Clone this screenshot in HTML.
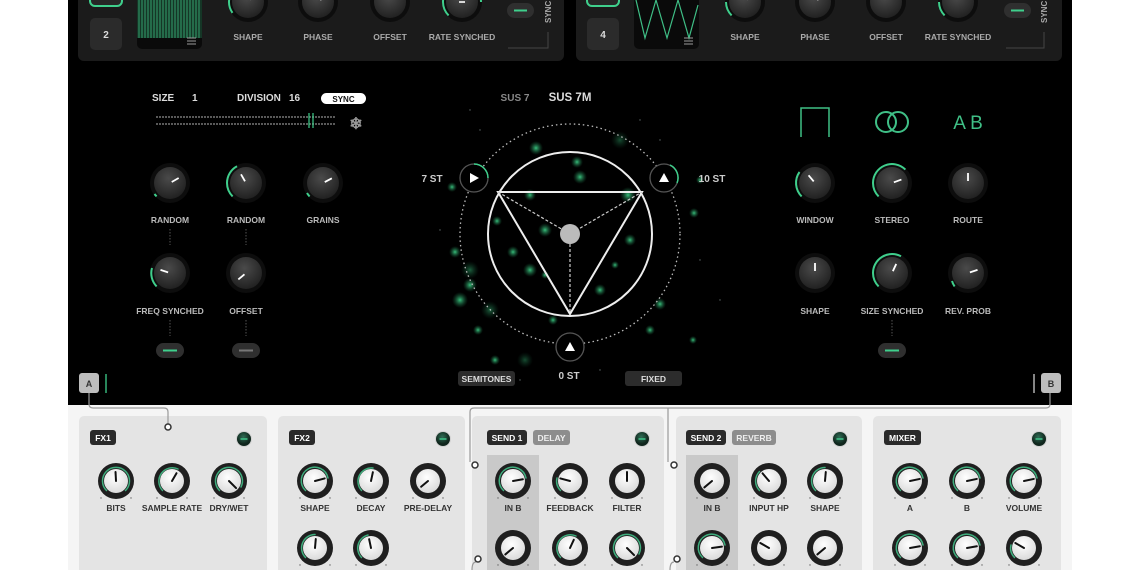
<!DOCTYPE html>
<html><head><meta charset="utf-8">
<style>
html,body{margin:0;padding:0;background:#fff;width:1140px;height:570px;overflow:hidden}
svg{display:block}
text{font-family:"Liberation Sans",sans-serif;font-weight:bold}
</style></head><body>
<svg width="1140" height="570" viewBox="0 0 1140 570" xmlns="http://www.w3.org/2000/svg">
<defs>
<radialGradient id="dk" cx="45%" cy="35%" r="70%"><stop offset="0" stop-color="#4a4a4a"/><stop offset="1" stop-color="#1e1e1e"/></radialGradient>
<radialGradient id="lk" cx="45%" cy="35%" r="70%"><stop offset="0" stop-color="#ffffff"/><stop offset="1" stop-color="#d8d8d8"/></radialGradient>
<radialGradient id="gl"><stop offset="0" stop-color="#3fd48a" stop-opacity=".9"/><stop offset="1" stop-color="#1a6b43" stop-opacity="0"/></radialGradient>
<radialGradient id="pw" cx="45%" cy="35%"><stop offset="0" stop-color="#2f6d55"/><stop offset="1" stop-color="#10261d"/></radialGradient>
<g id="dkb"><circle r="20" fill="#0d0d0d"/><circle r="16" fill="url(#dk)"/></g>
<g id="lkb"><circle r="18" fill="#1f1f1f"/><circle r="12" fill="url(#lk)"/><circle cx="-15" cy="17" r=".7" fill="#666"/><circle cx="15" cy="17" r=".7" fill="#666"/></g>
<g id="pwr"><circle r="8" fill="#bdbdbd" opacity=".5"/><circle r="7" fill="url(#pw)"/><line x1="-3.5" x2="3.5" stroke="#3fbf86" stroke-width="1.6"/></g>
</defs>

<rect x="68" y="0" width="1004" height="570" fill="#f5f5f5"/>
<rect x="68" y="0" width="1004" height="405" fill="#000"/>

<rect x="78" y="-8" width="486" height="69" rx="6" fill="#1b1b1b"/>
<rect x="576" y="-8" width="486" height="69" rx="6" fill="#1b1b1b"/>

<rect x="90" y="-12" width="32" height="18" rx="5" fill="#262626" stroke="#3fcf8c" stroke-width="2"/>
<rect x="90" y="18" width="32" height="32" rx="5" fill="#2b2b2b"/>
<text x="106" y="38" fill="#ddd" font-size="10" text-anchor="middle">2</text>
<rect x="137" y="-4" width="65" height="53" rx="5" fill="#0a0a0a"/>
<g stroke="#3fbf86" stroke-width="1" opacity=".9">
<path d="M139 0 V38 M142 0 V38 M145 0 V38 M148 0 V38 M151 0 V38 M154 0 V38 M157 0 V38 M160 0 V38 M163 0 V38 M166 0 V38 M169 0 V38 M172 0 V38 M175 0 V38 M178 0 V38 M181 0 V38 M184 0 V38 M187 0 V38 M190 0 V38 M193 0 V38 M196 0 V38 M199 0 V38"/>
</g>
<rect x="137" y="0" width="65" height="38" fill="#2a8a5c" opacity=".35"/>
<path d="M187 38h9M187 41h9M187 44h9" stroke="#999" stroke-width="1"/>

<g transform="translate(248,2)"><use href="#dkb"/><path d="M -13.4 13.4 A19 19 0 0 1 -19 0" stroke="#3fcf8c" stroke-width="2" fill="none" transform="rotate(10)"/><line x1="0" y1="-3" x2="0" y2="-9" stroke="#fff" stroke-width="1.6" transform="rotate(40)"/></g>
<g transform="translate(318,2)"><use href="#dkb"/><line x1="0" y1="-3" x2="0" y2="-9" stroke="#fff" stroke-width="1.6" transform="rotate(50)"/></g>
<g transform="translate(390,2)"><use href="#dkb"/><line x1="0" y1="-3" x2="0" y2="-9" stroke="#fff" stroke-width="1.6"/></g>
<g transform="translate(462,2)"><use href="#dkb"/><path d="M -13.4 13.4 A19 19 0 0 1 -19 0 A19 19 0 0 1 0 -19" stroke="#3fcf8c" stroke-width="2" fill="none"/><path d="M0 -19 A19 19 0 0 1 13.4 -13.4 A19 19 0 0 1 19 0" stroke="#3fcf8c" stroke-width="2" fill="none"/><line x1="-3" y1="0" x2="3" y2="0" stroke="#fff" stroke-width="1.6"/></g>
<g fill="#aaa" font-size="8.5" text-anchor="middle">
<text x="248" y="40">SHAPE</text><text x="318" y="40">PHASE</text><text x="390" y="40">OFFSET</text><text x="462" y="40">RATE SYNCHED</text>
<text x="745" y="40">SHAPE</text><text x="815" y="40">PHASE</text><text x="886" y="40">OFFSET</text><text x="958" y="40">RATE SYNCHED</text>
</g>
<rect x="507" y="3" width="27" height="15" rx="7.5" fill="#2f2f2f"/><line x1="514" y1="10.5" x2="527" y2="10.5" stroke="#3fcf8c" stroke-width="2"/>
<text transform="translate(551,23) rotate(-90)" fill="#aaa" font-size="8">SYNC</text>
<path d="M548 32 V48 H508" stroke="#444" fill="none"/>

<rect x="587" y="-12" width="32" height="18" rx="5" fill="#262626" stroke="#3fcf8c" stroke-width="2"/>
<rect x="587" y="18" width="32" height="32" rx="5" fill="#2b2b2b"/>
<text x="603" y="38" fill="#ddd" font-size="10" text-anchor="middle">4</text>
<rect x="634" y="-4" width="65" height="53" rx="5" fill="#0a0a0a"/>
<path d="M636 0 L645 38 L656 0 L667 38 L678 0 L689 38 L698 5" stroke="#3fbf86" stroke-width="1.2" fill="none"/>
<path d="M684 38h9M684 41h9M684 44h9" stroke="#999" stroke-width="1"/>
<g transform="translate(745,2)"><use href="#dkb"/><path d="M -13.4 13.4 A19 19 0 0 1 -19 0" stroke="#3fcf8c" stroke-width="2" fill="none"/><line x1="0" y1="-3" x2="0" y2="-9" stroke="#fff" stroke-width="1.6" transform="rotate(40)"/></g>
<g transform="translate(815,2)"><use href="#dkb"/><line x1="0" y1="-3" x2="0" y2="-9" stroke="#fff" stroke-width="1.6" transform="rotate(50)"/></g>
<g transform="translate(886,2)"><use href="#dkb"/><line x1="0" y1="-3" x2="0" y2="-9" stroke="#fff" stroke-width="1.6"/></g>
<g transform="translate(958,2)"><use href="#dkb"/><path d="M -13.4 13.4 A19 19 0 0 1 -19 0" stroke="#3fcf8c" stroke-width="2" fill="none"/><line x1="0" y1="-3" x2="0" y2="-9" stroke="#fff" stroke-width="1.6" transform="rotate(10)"/></g>
<rect x="1004" y="3" width="27" height="15" rx="7.5" fill="#2f2f2f"/><line x1="1011" y1="10.5" x2="1024" y2="10.5" stroke="#3fcf8c" stroke-width="2"/>
<text transform="translate(1047,23) rotate(-90)" fill="#aaa" font-size="8">SYNC</text>
<path d="M1044 32 V48 H1006" stroke="#444" fill="none"/>

<g fill="url(#gl)">
<circle cx="577" cy="162" r="6"/><circle cx="580" cy="177" r="7"/><circle cx="452" cy="187" r="5"/><circle cx="497" cy="221" r="5"/><circle cx="536" cy="148" r="7"/>
<circle cx="628" cy="195" r="8"/><circle cx="694" cy="213" r="5"/><circle cx="460" cy="300" r="8"/><circle cx="478" cy="330" r="5"/><circle cx="470" cy="285" r="7"/>
<circle cx="660" cy="304" r="6"/><circle cx="693" cy="340" r="4"/><circle cx="553" cy="320" r="5"/><circle cx="530" cy="270" r="7"/><circle cx="600" cy="290" r="6"/>
<circle cx="545" cy="230" r="7"/><circle cx="630" cy="240" r="6"/><circle cx="495" cy="360" r="5"/><circle cx="650" cy="330" r="5"/><circle cx="455" cy="252" r="6"/>
<circle cx="530" cy="195" r="6"/><circle cx="513" cy="252" r="6"/><circle cx="545" cy="275" r="4"/><circle cx="700" cy="180" r="4"/><circle cx="615" cy="265" r="4"/>
<circle cx="470" cy="270" r="9" opacity=".5"/><circle cx="490" cy="310" r="9" opacity=".5"/><circle cx="620" cy="140" r="9" opacity=".4"/><circle cx="525" cy="360" r="8" opacity=".4"/>
</g>
<g fill="#9aa" opacity=".6">
<circle cx="480" cy="130" r=".7"/><circle cx="640" cy="120" r=".7"/><circle cx="700" cy="260" r=".7"/><circle cx="440" cy="230" r=".7"/><circle cx="720" cy="300" r=".7"/><circle cx="600" cy="370" r=".7"/><circle cx="470" cy="110" r=".7"/><circle cx="660" cy="140" r=".7"/><circle cx="520" cy="380" r=".7"/>
</g>

<circle cx="570" cy="234" r="110" fill="none" stroke="#bbb" stroke-width="1.3" stroke-dasharray="1.5 3"/>
<circle cx="570" cy="234" r="82" fill="none" stroke="#eee" stroke-width="2"/>
<path d="M498 192 L642 192 L570 314 Z" fill="none" stroke="#eee" stroke-width="2"/>
<path d="M498 192 L570 234 L642 192 M570 234 L570 314" fill="none" stroke="#ccc" stroke-width="1.2" stroke-dasharray="3 2"/>
<circle cx="570" cy="234" r="10" fill="#bbb"/>
<g>
<circle cx="474" cy="178" r="14" fill="#000" stroke="#555" stroke-width="1.3"/><path d="M474 164 A14 14 0 0 1 488 178" stroke="#3fcf8c" stroke-width="1.5" fill="none"/><path d="M470 173 L479 178 L470 183 Z" fill="#fff"/>
<circle cx="664" cy="178" r="14" fill="#000" stroke="#555" stroke-width="1.3"/><path d="M670 165 A14 14 0 0 1 677 183" stroke="#3fcf8c" stroke-width="1.5" fill="none"/><path d="M664 173 L669 182 L659 182 Z" fill="#fff"/>
<circle cx="570" cy="347" r="14" fill="#000" stroke="#555" stroke-width="1.3"/><path d="M570 342 L575 351 L565 351 Z" fill="#fff"/>
</g>
<g fill="#ccc" font-size="10" text-anchor="middle">
<text x="432" y="182">7 ST</text><text x="712" y="182">10 ST</text><text x="569" y="379">0 ST</text>
</g>
<text x="515" y="101" fill="#888" font-size="10" text-anchor="middle">SUS 7</text>
<text x="570" y="101" fill="#ddd" font-size="11.5" text-anchor="middle">SUS 7M</text>
<rect x="458" y="371" width="57" height="15" rx="3" fill="#2c2c2c"/><text x="486.5" y="382" fill="#ddd" font-size="8.5" text-anchor="middle">SEMITONES</text>
<rect x="625" y="371" width="57" height="15" rx="3" fill="#2c2c2c"/><text x="653.5" y="382" fill="#ddd" font-size="8.5" text-anchor="middle">FIXED</text>

<g fill="#ddd" font-size="10">
<text x="152" y="101">SIZE</text><text x="192" y="101">1</text><text x="237" y="101">DIVISION</text><text x="289" y="101">16</text>
</g>
<rect x="321" y="93" width="45" height="11" rx="5.5" fill="#fff"/><text x="343.5" y="102" fill="#111" font-size="8" text-anchor="middle">SYNC</text>
<path d="M156 117 H336 M156 124 H336" stroke="#777" stroke-width="1.5" stroke-dasharray="2 1"/>
<path d="M309 113 V128 M313 113 V128" stroke="#3fcf8c" stroke-width="1.2"/>
<text x="356" y="129" fill="#999" font-size="16" text-anchor="middle">❄</text>

<g transform="translate(170,183)"><use href="#dkb"/><path d="M -13.4 13.4 A19 19 0 0 1 -15.5 11" stroke="#3fcf8c" stroke-width="2" fill="none"/><line x1="0" y1="-2" x2="0" y2="-10" stroke="#fff" stroke-width="1.8" transform="rotate(60)"/></g>
<g transform="translate(246,183)"><use href="#dkb"/><path d="M -13.4 13.4 A19 19 0 0 1 -19 0 A19 19 0 0 1 -9 -16.7" stroke="#3fcf8c" stroke-width="2" fill="none"/><line x1="0" y1="-2" x2="0" y2="-10" stroke="#fff" stroke-width="1.8" transform="rotate(-30)"/></g>
<g transform="translate(323,183)"><use href="#dkb"/><path d="M -13.4 13.4 A19 19 0 0 1 -16 10" stroke="#3fcf8c" stroke-width="2" fill="none"/><line x1="0" y1="-2" x2="0" y2="-10" stroke="#fff" stroke-width="1.8" transform="rotate(62)"/></g>
<g transform="translate(170,273)"><use href="#dkb"/><path d="M -13.4 13.4 A19 19 0 0 1 -18 -5" stroke="#3fcf8c" stroke-width="2" fill="none"/><line x1="0" y1="-2" x2="0" y2="-10" stroke="#fff" stroke-width="1.8" transform="rotate(-72)"/></g>
<g transform="translate(246,273)"><use href="#dkb"/><line x1="0" y1="-2" x2="0" y2="-10" stroke="#fff" stroke-width="1.8" transform="rotate(-130)"/></g>
<g fill="#bbb" font-size="8.5" text-anchor="middle">
<text x="170" y="223">RANDOM</text><text x="246" y="223">RANDOM</text><text x="323" y="223">GRAINS</text>
<text x="170" y="314">FREQ SYNCHED</text><text x="246" y="314">OFFSET</text>
<text x="815" y="223">WINDOW</text><text x="892" y="223">STEREO</text><text x="968" y="223">ROUTE</text>
<text x="815" y="314">SHAPE</text><text x="892" y="314">SIZE SYNCHED</text><text x="968" y="314">REV. PROB</text>
</g>
<path d="M170 229 V245 M246 229 V245 M170 320 V336 M246 320 V336 M892 320 V336" stroke="#555" stroke-width="1" stroke-dasharray="1.5 1.5"/>
<rect x="156" y="343" width="28" height="15" rx="7.5" fill="#2f2f2f"/><line x1="163" y1="350.5" x2="177" y2="350.5" stroke="#3fcf8c" stroke-width="2"/>
<rect x="232" y="343" width="28" height="15" rx="7.5" fill="#2f2f2f"/><line x1="239" y1="350.5" x2="253" y2="350.5" stroke="#777" stroke-width="2"/>
<rect x="878" y="343" width="28" height="15" rx="7.5" fill="#2f2f2f"/><line x1="885" y1="350.5" x2="899" y2="350.5" stroke="#3fcf8c" stroke-width="2"/>

<path d="M801 137 V108 H829 V137" stroke="#3fbf86" stroke-width="1.5" fill="none"/>
<circle cx="886" cy="122" r="10" fill="none" stroke="#3fbf86" stroke-width="2"/><circle cx="898" cy="122" r="10" fill="none" stroke="#3fbf86" stroke-width="2"/>
<text x="968" y="129" fill="#3fbf86" font-size="19" text-anchor="middle" style="font-weight:normal">A B</text>
<g transform="translate(815,183)"><use href="#dkb"/><path d="M -13.4 13.4 A19 19 0 0 1 -15.5 -11" stroke="#3fcf8c" stroke-width="2" fill="none"/><line x1="0" y1="-2" x2="0" y2="-10" stroke="#fff" stroke-width="1.8" transform="rotate(-40)"/></g>
<g transform="translate(892,183)"><use href="#dkb"/><path d="M -13.4 13.4 A19 19 0 0 1 -19 0 A19 19 0 0 1 13.4 -13.4" stroke="#3fcf8c" stroke-width="2" fill="none"/><line x1="0" y1="-2" x2="0" y2="-10" stroke="#fff" stroke-width="1.8" transform="rotate(70)"/></g>
<g transform="translate(968,183)"><use href="#dkb"/><line x1="0" y1="-2" x2="0" y2="-10" stroke="#fff" stroke-width="1.8"/></g>
<g transform="translate(815,273)"><use href="#dkb"/><line x1="0" y1="-2" x2="0" y2="-10" stroke="#fff" stroke-width="1.8"/></g>
<g transform="translate(892,273)"><use href="#dkb"/><path d="M -13.4 13.4 A19 19 0 0 1 -19 0 A19 19 0 0 1 9 -16.7" stroke="#3fcf8c" stroke-width="2" fill="none"/><line x1="0" y1="-2" x2="0" y2="-10" stroke="#fff" stroke-width="1.8" transform="rotate(25)"/></g>
<g transform="translate(968,273)"><use href="#dkb"/><path d="M -13.4 13.4 A19 19 0 0 1 -16 8" stroke="#3fcf8c" stroke-width="2" fill="none"/><line x1="0" y1="-2" x2="0" y2="-10" stroke="#fff" stroke-width="1.8" transform="rotate(72)"/></g>

<rect x="79" y="373" width="20" height="20" rx="3" fill="#bdbdbd"/><text x="89" y="387" fill="#333" font-size="9" text-anchor="middle">A</text>
<line x1="106" y1="374" x2="106" y2="393" stroke="#3fcf8c" stroke-width="1.3"/>
<rect x="1041" y="373" width="20" height="20" rx="3" fill="#bdbdbd"/><text x="1051" y="387" fill="#333" font-size="9" text-anchor="middle">B</text>
<line x1="1034" y1="374" x2="1034" y2="393" stroke="#ccc" stroke-width="1.3"/>

<g fill="#e4e4e4">
<rect x="79" y="416" width="188" height="160" rx="5"/>
<rect x="278" y="416" width="187" height="160" rx="5"/>
<rect x="472" y="416" width="192" height="160" rx="5"/>
<rect x="676" y="416" width="186" height="160" rx="5"/>
<rect x="873" y="416" width="188" height="160" rx="5"/>
</g>
<rect x="487" y="455" width="52" height="120" fill="#c9c9c9"/>
<rect x="686" y="455" width="52" height="120" fill="#c9c9c9"/>

<g stroke="#9a9a9a" stroke-width="1.2" fill="none">
<path d="M89 393 V404 Q89 408 93 408 H164 Q168 408 168 412 V424"/>
<path d="M1050 393 V404 Q1050 408 1046 408 H474 Q470 408 470 412 V462"/>
<path d="M668 408 V462"/>
<path d="M476 562 Q472 562 472 570"/><path d="M674 562 Q670 562 670 570"/>
</g>
<g fill="#fff" stroke="#333" stroke-width="1.5">
<circle cx="168" cy="427" r="3"/><circle cx="475" cy="465" r="3"/><circle cx="674" cy="465" r="3"/><circle cx="478" cy="559" r="3"/><circle cx="677" cy="559" r="3"/>
</g>

<g font-size="8.5" text-anchor="middle">
<rect x="90" y="430" width="26" height="15" rx="3" fill="#2a2a2a"/><text x="103" y="441" fill="#fff">FX1</text>
<rect x="289" y="430" width="26" height="15" rx="3" fill="#2a2a2a"/><text x="302" y="441" fill="#fff">FX2</text>
<rect x="487" y="430" width="40" height="15" rx="3" fill="#2a2a2a"/><text x="507" y="441" fill="#fff">SEND 1</text>
<rect x="533" y="430" width="37" height="15" rx="3" fill="#8d8d8d"/><text x="551.5" y="441" fill="#eee">DELAY</text>
<rect x="686" y="430" width="40" height="15" rx="3" fill="#2a2a2a"/><text x="706" y="441" fill="#fff">SEND 2</text>
<rect x="732" y="430" width="44" height="15" rx="3" fill="#8d8d8d"/><text x="754" y="441" fill="#eee">REVERB</text>
<rect x="884" y="430" width="37" height="15" rx="3" fill="#2a2a2a"/><text x="902.5" y="441" fill="#fff">MIXER</text>
</g>
<use href="#pwr" x="244" y="439"/><use href="#pwr" x="443" y="439"/><use href="#pwr" x="642" y="439"/><use href="#pwr" x="840" y="439"/><use href="#pwr" x="1039" y="439"/>

<g stroke-linecap="round">
<g transform="translate(116,481)"><use href="#lkb"/><path d="M -9.5 9.5 A13.5 13.5 0 1 1 9.5 9.5" stroke="#3fae7e" stroke-width="1.5" fill="none"/><line x1="0" y1="0" x2="0" y2="-9" stroke="#111" stroke-width="2" transform="rotate(-3)"/></g>
<g transform="translate(172,481)"><use href="#lkb"/><path d="M -9.5 9.5 A13.5 13.5 0 0 1 6 -12" stroke="#3fae7e" stroke-width="1.5" fill="none"/><line x1="0" y1="0" x2="0" y2="-9" stroke="#111" stroke-width="2" transform="rotate(30)"/></g>
<g transform="translate(229,481)"><use href="#lkb"/><path d="M -9.5 9.5 A13.5 13.5 0 1 1 12 6" stroke="#3fae7e" stroke-width="1.5" fill="none"/><line x1="0" y1="0" x2="0" y2="-10" stroke="#111" stroke-width="2" transform="rotate(135)"/></g>
<g transform="translate(315,481)"><use href="#lkb"/><path d="M -9.5 9.5 A13.5 13.5 0 1 1 13 -3" stroke="#3fae7e" stroke-width="1.5" fill="none"/><line x1="0" y1="0" x2="0" y2="-10" stroke="#111" stroke-width="2" transform="rotate(75)"/></g>
<g transform="translate(371,481)"><use href="#lkb"/><path d="M -9.5 9.5 A13.5 13.5 0 0 1 2 -13" stroke="#3fae7e" stroke-width="1.5" fill="none"/><line x1="0" y1="0" x2="0" y2="-9" stroke="#111" stroke-width="2" transform="rotate(12)"/></g>
<g transform="translate(428,481)"><use href="#lkb"/><line x1="0" y1="0" x2="0" y2="-9" stroke="#111" stroke-width="2" transform="rotate(-130)"/></g>
<g transform="translate(315,548)"><use href="#lkb"/><path d="M -9.5 9.5 A13.5 13.5 0 0 1 0 -13.5" stroke="#3fae7e" stroke-width="1.5" fill="none"/><line x1="0" y1="0" x2="0" y2="-9" stroke="#111" stroke-width="2" transform="rotate(5)"/></g>
<g transform="translate(371,548)"><use href="#lkb"/><path d="M -9.5 9.5 A13.5 13.5 0 0 1 -3 -13" stroke="#3fae7e" stroke-width="1.5" fill="none"/><line x1="0" y1="0" x2="0" y2="-9" stroke="#111" stroke-width="2" transform="rotate(-12)"/></g>

<g transform="translate(513,481)"><use href="#lkb"/><path d="M -9.5 9.5 A13.5 13.5 0 1 1 13 -3" stroke="#3fae7e" stroke-width="1.5" fill="none"/><line x1="0" y1="0" x2="0" y2="-10" stroke="#111" stroke-width="2" transform="rotate(80)"/></g>
<g transform="translate(570,481)"><use href="#lkb"/><path d="M -9.5 9.5 A13.5 13.5 0 0 1 -13 -3" stroke="#3fae7e" stroke-width="1.5" fill="none"/><line x1="0" y1="0" x2="0" y2="-10" stroke="#111" stroke-width="2" transform="rotate(-75)"/></g>
<g transform="translate(627,481)"><use href="#lkb"/><line x1="0" y1="0" x2="0" y2="-9" stroke="#111" stroke-width="2"/></g>
<g transform="translate(513,548)"><use href="#lkb"/><line x1="0" y1="0" x2="0" y2="-10" stroke="#111" stroke-width="2" transform="rotate(-130)"/></g>
<g transform="translate(570,548)"><use href="#lkb"/><path d="M -9.5 9.5 A13.5 13.5 0 0 1 6 -12" stroke="#3fae7e" stroke-width="1.5" fill="none"/><line x1="0" y1="0" x2="0" y2="-9" stroke="#111" stroke-width="2" transform="rotate(25)"/></g>
<g transform="translate(627,548)"><use href="#lkb"/><path d="M -9.5 9.5 A13.5 13.5 0 1 1 12 6" stroke="#3fae7e" stroke-width="1.5" fill="none"/><line x1="0" y1="0" x2="0" y2="-10" stroke="#111" stroke-width="2" transform="rotate(135)"/></g>

<g transform="translate(712,481)"><use href="#lkb"/><line x1="0" y1="0" x2="0" y2="-10" stroke="#111" stroke-width="2" transform="rotate(-130)"/></g>
<g transform="translate(769,481)"><use href="#lkb"/><path d="M -9.5 9.5 A13.5 13.5 0 0 1 -9.5 -9.5" stroke="#3fae7e" stroke-width="1.5" fill="none"/><line x1="0" y1="0" x2="0" y2="-10" stroke="#111" stroke-width="2" transform="rotate(-40)"/></g>
<g transform="translate(825,481)"><use href="#lkb"/><path d="M -9.5 9.5 A13.5 13.5 0 0 1 0 -13.5" stroke="#3fae7e" stroke-width="1.5" fill="none"/><line x1="0" y1="0" x2="0" y2="-9" stroke="#111" stroke-width="2" transform="rotate(5)"/></g>
<g transform="translate(712,548)"><use href="#lkb"/><path d="M -9.5 9.5 A13.5 13.5 0 1 1 13 -3" stroke="#3fae7e" stroke-width="1.5" fill="none"/><line x1="0" y1="0" x2="0" y2="-10" stroke="#111" stroke-width="2" transform="rotate(82)"/></g>
<g transform="translate(769,548)"><use href="#lkb"/><line x1="0" y1="0" x2="0" y2="-10" stroke="#111" stroke-width="2" transform="rotate(-60)"/></g>
<g transform="translate(825,548)"><use href="#lkb"/><line x1="0" y1="0" x2="0" y2="-10" stroke="#111" stroke-width="2" transform="rotate(-130)"/></g>

<g transform="translate(910,481)"><use href="#lkb"/><path d="M -9.5 9.5 A13.5 13.5 0 1 1 13 -3" stroke="#3fae7e" stroke-width="1.5" fill="none"/><line x1="0" y1="0" x2="0" y2="-10" stroke="#111" stroke-width="2" transform="rotate(78)"/></g>
<g transform="translate(967,481)"><use href="#lkb"/><path d="M -9.5 9.5 A13.5 13.5 0 1 1 13 -3" stroke="#3fae7e" stroke-width="1.5" fill="none"/><line x1="0" y1="0" x2="0" y2="-10" stroke="#111" stroke-width="2" transform="rotate(78)"/></g>
<g transform="translate(1024,481)"><use href="#lkb"/><path d="M -9.5 9.5 A13.5 13.5 0 1 1 13 -3" stroke="#3fae7e" stroke-width="1.5" fill="none"/><line x1="0" y1="0" x2="0" y2="-10" stroke="#111" stroke-width="2" transform="rotate(78)"/></g>
<g transform="translate(910,548)"><use href="#lkb"/><path d="M -9.5 9.5 A13.5 13.5 0 1 1 13 -3" stroke="#3fae7e" stroke-width="1.5" fill="none"/><line x1="0" y1="0" x2="0" y2="-10" stroke="#111" stroke-width="2" transform="rotate(80)"/></g>
<g transform="translate(967,548)"><use href="#lkb"/><path d="M -9.5 9.5 A13.5 13.5 0 1 1 13 -3" stroke="#3fae7e" stroke-width="1.5" fill="none"/><line x1="0" y1="0" x2="0" y2="-10" stroke="#111" stroke-width="2" transform="rotate(80)"/></g>
<g transform="translate(1024,548)"><use href="#lkb"/><path d="M -9.5 9.5 A13.5 13.5 0 0 1 -13 -3" stroke="#3fae7e" stroke-width="1.5" fill="none"/><line x1="0" y1="0" x2="0" y2="-10" stroke="#111" stroke-width="2" transform="rotate(-60)"/></g>
</g>

<g fill="#333" font-size="8.5" text-anchor="middle">
<text x="116" y="511">BITS</text><text x="172" y="511">SAMPLE RATE</text><text x="229" y="511">DRY/WET</text>
<text x="315" y="511">SHAPE</text><text x="371" y="511">DECAY</text><text x="428" y="511">PRE-DELAY</text>
<text x="513" y="511">IN B</text><text x="570" y="511">FEEDBACK</text><text x="627" y="511">FILTER</text>
<text x="712" y="511">IN B</text><text x="769" y="511">INPUT HP</text><text x="825" y="511">SHAPE</text>
<text x="910" y="511">A</text><text x="967" y="511">B</text><text x="1024" y="511">VOLUME</text>
</g>
</svg>
</body></html>
